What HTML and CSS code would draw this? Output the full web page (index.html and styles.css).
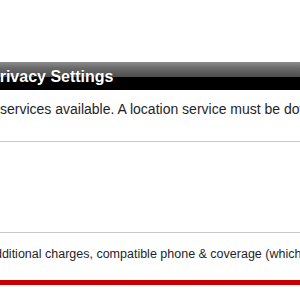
FILE: index.html
```html
<!DOCTYPE html>
<html>
<head>
<meta charset="utf-8">
<link rel="stylesheet" href="styles.css">
</head>
<body>
<div class="page">
  <div class="header"><h2 class="title">Privacy Settings</h2></div>
  <p class="intro">services available. A location service must be downloaded first.</p>
  <div class="section"></div>
  <p class="note">additional charges, compatible phone &amp; coverage (which may vary)</p>
  <div class="redbar"></div>
</div>
</body>
</html>
```
FILE: styles.css
```css
html, body {
  margin: 0;
  padding: 0;
  background: #fff;
  overflow: hidden;
}
.page {
  width: 300px;
  height: 300px;
  overflow: hidden;
  font-family: "Liberation Sans", Arial, sans-serif;
  color: #222;
  padding-top: 62px;
  box-sizing: border-box;
}
.header {
  height: 28px;
  background: linear-gradient(#8c8c8c 0, #6a6a6a 6px, #4e4e4e 15px, #000 15px, #000 100%);
  white-space: nowrap;
}
.title {
  margin: 0 0 0 -11px;
  padding-top: 1px;
  font-size: 16px;
  line-height: 28px;
  font-weight: bold;
  color: #fff;
  text-shadow: 0 1px 1px rgba(0,0,0,0.6);
}
.intro {
  margin: 11px 0 0 0;
  font-size: 14px;
  line-height: 16px;
  white-space: nowrap;
  color: #1e1e2a;
}
.section {
  margin-top: 24px;
  height: 90px;
  border-top: 1px solid #c8c8c8;
  border-bottom: 1px solid #c8c8c8;
}
.note {
  margin: 13px 0 0 -12px;
  font-size: 12.5px;
  line-height: 16px;
  white-space: nowrap;
  color: #1e1e2a;
}
.redbar {
  margin-top: 18px;
  height: 5px;
  background: #c90000;
}
```
